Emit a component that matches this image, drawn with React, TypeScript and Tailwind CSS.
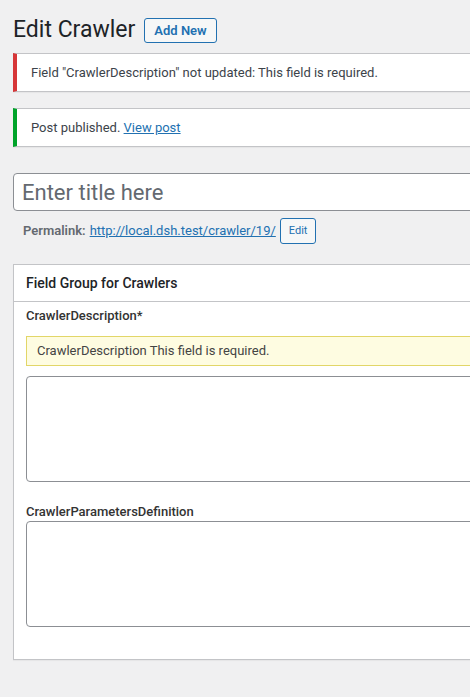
import React from "react";

type NoticeProps = {
  tone: "error" | "success";
  children: React.ReactNode;
};

function Notice({ tone, children }: Readonly<NoticeProps>) {
  const bar = tone === "error" ? "border-l-[#d63638]" : "border-l-[#00a32a]";
  return (
    <div
      className={`border border-[#c3c4c7] border-l-4 ${bar} bg-white px-[14px] py-[8px] text-[13px] leading-[21px] text-[#3c434a] shadow-[0_1px_1px_rgba(0,0,0,0.04)]`}
    >
      {children}
    </div>
  );
}

function WpButton({
  small,
  children,
}: Readonly<{ small?: boolean; children: React.ReactNode }>) {
  return (
    <button
      type="button"
      className={
        small
          ? "h-[26px] rounded-[3px] border border-[#2271b1] bg-[#f6f7f7] px-[8px] text-[11px] leading-[24px] text-[#2271b1]"
          : "h-[25px] rounded-[3px] border border-[#2271b1] bg-[#f6f7f7] px-[9px] text-[13px] font-semibold leading-[23px] text-[#2271b1]"
      }
    >
      {children}
    </button>
  );
}

export default function App() {
  return (
    <div className="min-h-screen w-full overflow-hidden bg-[#f0f0f1] font-['Roboto',_'Liberation_Sans',_sans-serif] text-[#3c434a]">
      <div className="w-[900px] pl-[13px]">
        <div className="flex items-center pt-[15px]">
          <h1 className="text-[23px] font-normal leading-[30px] text-[#1d2327]">
            Edit Crawler
          </h1>
          <div className="ml-[9px]">
            <WpButton>Add New</WpButton>
          </div>
        </div>

        <div className="mt-[8px]">
          <Notice tone="error">
            Field "CrawlerDescription" not updated: This field is required.
          </Notice>
        </div>
        <div className="mt-[16px]">
          <Notice tone="success">
            Post published.{" "}
            <a href="#" className="text-[#2271b1] underline">
              View post
            </a>
          </Notice>
        </div>

        <div className="mt-[26px]">
          <input
            type="text"
            placeholder="Enter title here"
            className="block h-[38px] w-full rounded-[4px] border border-[#8c8f94] bg-white px-[8px] text-[22px] text-[#2c3338] outline-none placeholder:text-[#646970]"
          />
        </div>

        <div className="mt-[7px] flex h-[26px] items-center px-[10px] text-[13px]">
          <strong className="font-semibold text-[#646970]">Permalink:</strong>
          <a href="#" className="ml-[4px] text-[#2271b1] underline">
            http://local.dsh.test/crawler/19/
          </a>
          <span className="ml-[4px]">
            <WpButton small>Edit</WpButton>
          </span>
        </div>

        <div className="mt-[20px] border border-[#c3c4c7] bg-white pb-[32px] shadow-[0_1px_1px_rgba(0,0,0,0.04)]">
          <div className="border-b border-[#c3c4c7] px-[12px] py-[8px]">
            <h2 className="text-[14px] font-medium leading-[20px] text-[#1d2327]">
              Field Group for Crawlers
            </h2>
          </div>

          <div className="px-[12px] pt-[5px]">
            <label className="block text-[13px] font-medium leading-[18px] text-[#333]">
              CrawlerDescription*
            </label>
            <div className="mt-[11px] border border-[#e2d668] bg-[#fefce1] px-[10px] py-[5px] text-[13px] leading-[18px] text-[#444]">
              CrawlerDescription This field is required.
            </div>
            <textarea className="mt-[10px] block h-[106px] w-full resize-none rounded-[4px] border border-[#8c8f94] bg-white outline-none" />

            <label className="mt-[21px] block text-[13px] font-medium leading-[18px] text-[#333]">
              CrawlerParametersDefinition
            </label>
            <textarea className="block h-[106px] w-full resize-none rounded-[4px] border border-[#8c8f94] bg-white outline-none" />
          </div>
        </div>
      </div>
    </div>
  );
}
